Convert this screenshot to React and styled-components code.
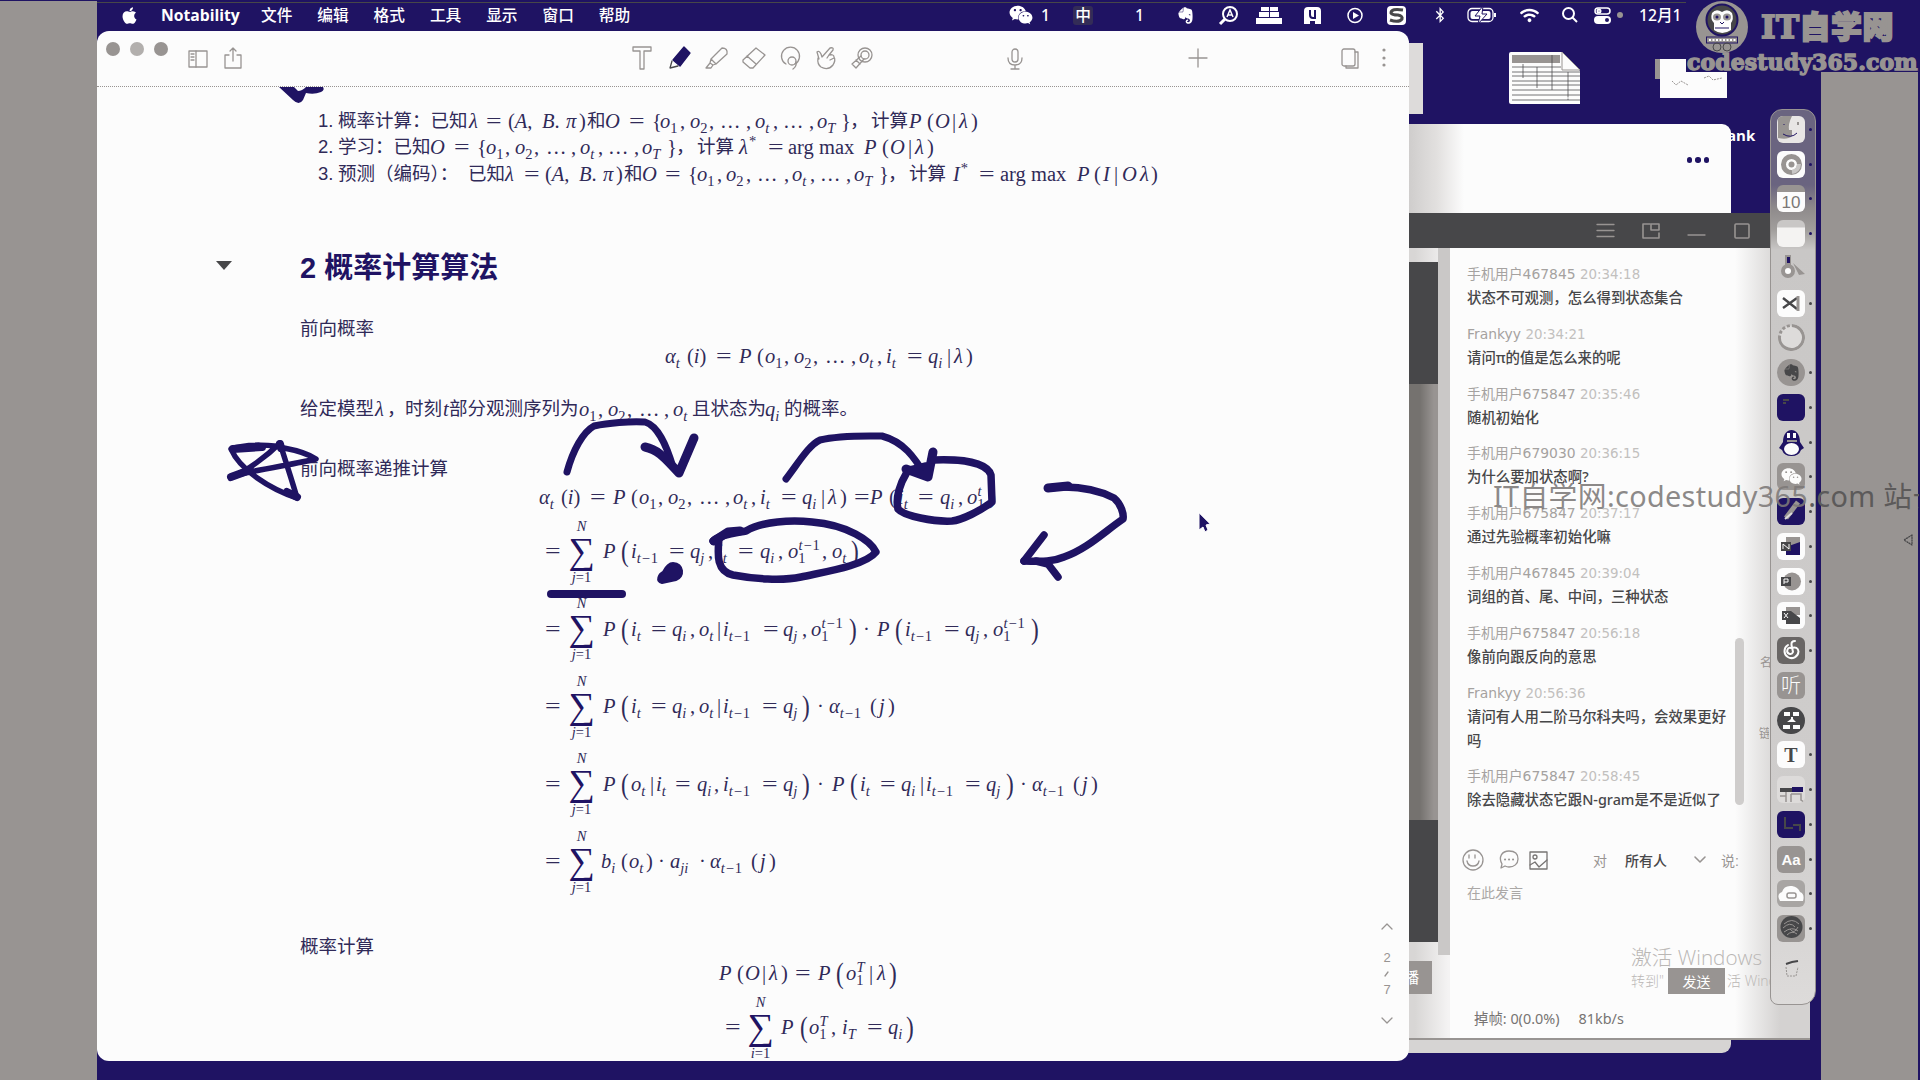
import React from "react";
import styled, { createGlobalStyle, css } from "styled-components";
import { FaApple, FaWeixin, FaEvernote, FaBluetoothB, FaWifi } from "react-icons/fa";

const NAVY = "#1f1363";
const PAPER = "#fcfcfc";
const GREY = "#989492";
const DARK = "#474749";
const INK = "#302a58";
const CJK = '"Liberation Sans", "Noto Sans CJK SC", sans-serif';

const Global = createGlobalStyle`
  * { box-sizing: border-box; }
  body { margin: 0; overflow: hidden; background: ${NAVY}; font-family: ${CJK}; }
  svg { display: block; overflow: visible; flex: none; }
`;

const Desktop = styled.div`
  position: relative;
  width: 1920px;
  height: 1080px;
  overflow: hidden;
  display: flex;
  justify-content: space-between;
  background: ${NAVY};
`;
const SideBar = styled.div`
  width: 97px;
  margin-top: ${(p) => p.$top}px;
  margin-right: ${(p) => p.$right || 0}px;
  background: ${GREY};
`;

/* ---------- menu bar ---------- */
const MenuBar = styled.header`
  position: absolute;
  left: 97px;
  top: 2px;
  width: 1589px;
  height: 28px;
  display: flex;
  align-items: center;
  padding: 0 0 3px 23px;
  overflow: hidden;
  border-top: 1px solid ${DARK};
  color: #fff;
  font-size: 15.7px;
  font-weight: 500;
  white-space: nowrap;
`;
const MenuItem = styled.span`
  width: ${(p) => p.$w}px;
  flex: none;
  display: flex;
  align-items: center;
  line-height: 20px;
  font-weight: ${(p) => (p.$bold ? 700 : 500)};
  font-family: ${(p) => (p.$bold ? '"Open Sans", sans-serif' : '"Noto Sans", "Noto Sans CJK SC", sans-serif')};
`;
const InputMode = styled.span`
  width: 20px;
  height: 19px;
  border-radius: 3px;
  line-height: 18px;
  text-align: center;
  background: #332c57;
`;

/* ---------- notes window ---------- */
const NotesWindow = styled.section`
  position: absolute;
  left: 97px;
  top: 31px;
  width: 1312px;
  height: 1030px;
  border-radius: 12px;
  background: ${PAPER};
  overflow: hidden;
  display: flex;
  flex-direction: column;
`;
const Toolbar = styled.div`
  height: 56px;
  flex: none;
  display: flex;
  align-items: center;
  padding: 0 0 2px 9px;
  border-bottom: 1px dotted ${GREY};
`;
const Lights = styled.div`
  display: flex;
  gap: 10px;
  width: 82px;
  margin-bottom: 18px;
`;
const Light = styled.i`
  width: 14px;
  height: 14px;
  border-radius: 50%;
  background: ${(p) => (p.$soft ? "#b2afad" : GREY)};
`;
const MicDot = styled.i`
  width: 6px;
  height: 6px;
  border-radius: 50%;
  background: ${GREY};
`;
const Tool = styled.span`
  width: ${(p) => p.$w}px;
  flex: none;
  padding-top: ${(p) => p.$drop || 0}px;
`;
const Page = styled.main`
  flex: 1;
  min-height: 0;
  overflow: hidden;
  padding-top: 20.5px;
  color: ${INK};
`;
const Row = styled.div`
  height: ${(p) => p.$h}px;
  margin-top: ${(p) => p.$mt || 0}px;
  padding-left: ${(p) => p.$x - 97}px;
  display: flex;
  align-items: center;
  white-space: nowrap;
  font-size: 18.5px;
`;
const Heading = styled.h2`
  margin: -3px 0 0;
  font-size: 29px;
  font-weight: 700;
  color: ${NAVY};
`;
const Term = styled.span`
  width: ${(p) => (p.$w ? `${p.$w}px` : "auto")};
  flex: none;
  height: 26px;
  line-height: 26px;
  font-family: "Liberation Serif", serif;
  font-size: 20.5px;
`;
const Words = styled(Term)`
  font-family: ${CJK};
  font-size: 18.5px;
`;
const Big = styled.span`
  font-size: 29px;
  line-height: 0;
  vertical-align: -3px;
  display: inline-block;
  transform: scaleX(0.8);
  transform-origin: left;
`;
const Equals = styled.span`
  display: inline-block;
  transform: scaleX(1.35);
  transform-origin: left;
`;
const small = css`
  font-size: 14.5px;
  line-height: 0;
  letter-spacing: ${(p) => (p.$wide ? 0.9 : 0)}px;
`;
const Sub = styled.span`
  ${small}
  vertical-align: -5px;
`;
const Sup = styled.span`
  ${small}
  vertical-align: 8px;
  margin-left: ${(p) => (p.$stacked ? -7 : 1)}px;
`;
const SumBox = styled.span`
  width: ${(p) => p.$w}px;
  flex: none;
  display: flex;
  flex-direction: column;
  align-items: center;
  padding-right: ${(p) => p.$w - 25}px;
  font-family: "Liberation Serif", serif;
  font-size: 14.5px;
  line-height: 16px;
`;
const Sigma = styled.span`
  font-size: 37px;
  height: 35px;
  line-height: 33px;
  color: ${NAVY};
`;

const italicise = (s, key) =>
  s.split(/([A-Za-zαλπ]+)/).map((t, i) => (i % 2 ? <i key={`${key}-${i}`}>{t}</i> : t));

/* _x or _{xyz} lowers, ^x or ^{xyz} raises, << and >> are tall parentheses */
function mathNodes(src) {
  const out = [];
  const re = /([_^])(\{[^}]*\}|.)|<<|>>/g;
  let last = 0;
  let prevSub = false;
  let m;
  while ((m = re.exec(src))) {
    if (m.index > last) {
      out.push(italicise(src.slice(last, m.index), last));
      prevSub = false;
    }
    if (m[0] === "<<" || m[0] === ">>") {
      out.push(<Big key={m.index}>{m[0] === "<<" ? "(" : ")"}</Big>);
    } else {
      const wide = m[2].includes("−");
      const body = italicise(m[2].replace(/[{}]/g, ""), m.index);
      out.push(
        m[1] === "_" ? <Sub key={m.index} $wide={wide}>{body}</Sub> : <Sup key={m.index} $wide={wide} $stacked={prevSub}>{body}</Sup>
      );
      prevSub = m[1] === "_";
    }
    last = re.lastIndex;
  }
  if (last < src.length) out.push(italicise(src.slice(last), last));
  return out;
}

/* terms alternate between the x where a term starts and its source */
function Line({ h, mt, terms }) {
  const cells = [];
  for (let i = 0; i < terms.length; i += 2) {
    const w = i + 2 < terms.length ? terms[i + 2] - terms[i] : 0;
    const t = terms[i + 1];
    if (t.startsWith("SUM")) {
      cells.push(
        <SumBox key={i} $w={w}>
          <i>N</i>
          <Sigma>∑</Sigma>
          <span><i>{t.slice(3)}</i>=1</span>
        </SumBox>
      );
    } else if (/[\u3001-\u9fff\uff00-\uffef]|^\d\.$/.test(t)) {
      cells.push(<Words key={i} $w={w}>{t}</Words>);
    } else if (t === "arg max") {
      cells.push(<Term key={i} $w={w}>{t}</Term>);
    } else if (t === "=") {
      cells.push(<Term key={i} $w={w}><Equals>=</Equals></Term>);
    } else {
      cells.push(<Term key={i} $w={w}>{mathNodes(t)}</Term>);
    }
  }
  return <Row $h={h} $mt={mt} $x={terms[0]}>{cells}</Row>;
}

const LIST = [
  [318, "1.", 338, "概率计算：已知", 469, "λ", 486, "=", 508, "(A,", 542, "B.", 566, "π", 579, ")", 587, "和", 605, "O", 629, "=", 652, "{", 660, "o_1", 680, ",", 690, "o_2", 709, ",", 720, "…", 746, ",", 755, "o_t", 773, ",", 783, "…", 809, ",", 817, "o_T", 841, "}", 850, "，", 871, "计算", 909, "P", 927, "(", 935, "O", 952, "|", 959, "λ", 971, ")"],
  [318, "2.", 338, "学习：已知", 430, "O", 454, "=", 477, "{", 486, "o_1", 505, ",", 515, "o_2", 534, ",", 546, "…", 571, ",", 580, "o_t", 598, ",", 608, "…", 634, ",", 642, "o_T", 667, "}", 676, "，", 697, "计算", 739, "λ^*", 768, "=", 788, "arg max", 864, "P", 882, "(", 890, "O", 908, "|", 915, "λ", 927, ")"],
  [318, "3.", 338, "预测（编码）：", 468, "已知", 505, "λ", 524, "=", 545, "(A,", 579, "B.", 603, "π", 616, ")", 624, "和", 642, "O", 665, "=", 688, "{", 697, "o_1", 717, ",", 726, "o_2", 746, ",", 757, "…", 784, ",", 792, "o_t", 810, ",", 820, "…", 846, ",", 854, "o_T", 879, "}", 888, "，", 909, "计算", 953, "I^*", 979, "=", 1000, "arg max", 1077, "P", 1094, "(", 1103, "I", 1114, "|", 1122, "O", 1140, "λ", 1151, ")"],
];
const ALPHA = [539, "α_t", 561, "(i)", 590, "=", 613, "P", 631, "(", 639, "o_1", 658, ",", 668, "o_2", 687, ",", 699, "…", 725, ",", 733, "o_t", 751, ",", 760, "i_t", 781, "=", 802, "q_i", 821, "|", 828, "λ", 840, ")"];
const shift = (terms, d) => terms.map((t) => (typeof t === "number" ? t + d : t));
const SUMS = [
  [545, "=", 569, "SUMj", 603, "P", 621, "<<", 631, "i_{t−1}", 669, "=", 690, "q_j", 708, ",", 717, "i_t", 738, "=", 760, "q_i", 778, ",", 788, "o_1^{t−1}", 822, ",", 832, "o_t", 851, ">>"],
  [545, "=", 569, "SUMj", 603, "P", 621, "<<", 631, "i_t", 651, "=", 672, "q_i", 690, ",", 699, "o_t", 717, "|", 723, "i_{t−1}", 763, "=", 783, "q_j", 802, ",", 811, "o_1^{t−1}", 849, ">>", 863, "·", 877, "P", 895, "<<", 905, "i_{t−1}", 944, "=", 965, "q_j", 983, ",", 993, "o_1^{t−1}", 1031, ">>"],
  [545, "=", 569, "SUMj", 603, "P", 621, "<<", 631, "i_t", 651, "=", 672, "q_i", 690, ",", 699, "o_t", 717, "|", 723, "i_{t−1}", 762, "=", 783, "q_j", 802, ">>", 817, "·", 829, "α_{t−1}", 870, "(", 879, "j", 888, ")"],
  [545, "=", 569, "SUMj", 603, "P", 621, "<<", 631, "o_t", 650, "|", 656, "i_t", 675, "=", 697, "q_i", 714, ",", 723, "i_{t−1}", 762, "=", 783, "q_j", 802, ">>", 817, "·", 832, "P", 850, "<<", 860, "i_t", 880, "=", 901, "q_i", 920, "|", 926, "i_{t−1}", 965, "=", 986, "q_j", 1006, ">>", 1020, "·", 1032, "α_{t−1}", 1073, "(", 1082, "j", 1091, ")"],
  [545, "=", 569, "SUMj", 601, "b_i", 621, "(", 629, "o_t", 646, ")", 658, "·", 670, "a_{ji}", 699, "·", 710, "α_{t−1}", 751, "(", 760, "j", 769, ")"],
];

const InkLayer = styled.svg`
  position: absolute;
  left: 0;
  top: 0;
  pointer-events: none;
`;
const Pager = styled.nav`
  position: absolute;
  left: 1377px;
  top: 923px;
  width: 20px;
  height: 101px;
  display: flex;
  flex-direction: column;
  align-items: center;
  justify-content: space-between;
  color: ${GREY};
  font-size: 13px;
  line-height: 13px;
`;
const PageCount = styled.div`
  display: flex;
  flex-direction: column;
  align-items: center;
  gap: 6.5px;
`;

function Handwriting() {
  return (
    <InkLayer width="1920" height="1080" fill="none" stroke={NAVY} strokeWidth="7.500" strokeLinecap="round" strokeLinejoin="round">
      <path fill={NAVY} stroke="none" d="M279 87 L293 100 Q299 106 303 100 L306 93 Q314 95 321 92 Q325 90 323 87 H306 Q302 91 298 91 L294 87Z" />
      <path strokeWidth="5.500" d="M231 449 C248 443 275 445 284 448 C300 451 310 455 316 459 C300 463 268 468 245 473 C238 475 234 476 231 477 C246 472 268 455 280 443 C285 460 292 480 297 498 C270 489 240 470 231 449" />
      <path strokeWidth="8" d="M233 449 L262 447 M231 477 L250 470 M287 492 L297 497 M280 444 L281 448" />
      <path strokeWidth="7" d="M567 472 C573 450 583 432 594 426 C608 423 630 421 645 422 C658 426 666 444 673 467" />
      <path strokeWidth="9" d="M645 447 C660 450 668 462 679 473 L694 438" />
      <path strokeWidth="7" d="M786 479 C799 462 809 445 820 440 C840 435 865 436 882 436 C904 442 914 457 926 476" />
      <path strokeWidth="9" d="M906 469 L928 477 L933 452" />
      <path fill={NAVY} d="M910 470 L926 466 L928 477Z" />
      <path d="M934 460 C960 459 987 462 991 475 L992 502 C980 511 962 520 952 521 C934 522 904 516 898 509 C895 497 901 482 906 474" />
      <path strokeWidth="9" d="M1048 488 L1068 486" />
      <path d="M1048 488 C1076 485 1098 490 1114 498 C1121 504 1124 514 1123 519 C1104 532 1087 549 1064 557 C1050 563 1036 561 1024 561" />
      <path d="M1044 535 L1024 561 M1036 561 L1048 564 L1058 577" />
      <path d="M713 541 C721 534 735 533 746 531 C762 521 792 520 812 522 C848 525 871 541 876 552 C865 566 823 572 801 577 C782 581 754 579 733 575 C715 571 718 552 719 538" />
      <path strokeWidth="9" d="M714 541 L728 532 L740 531" />
      <path fill={NAVY} strokeWidth="2" d="M673 563 C684 564 685 577 676 580 L662 583 C655 581 659 574 663 572 C666 566 669 563 673 563Z" />
      <path strokeWidth="8" d="M551 594 H622" />
      <path fill={NAVY} stroke="#fff" strokeWidth="1" d="M1199 513 V530 L1203 527 L1205 532 L1208 530 L1206 525 L1210 524Z" />
    </InkLayer>
  );
}

const TI = ({ w = 22, h = 22, sw = 1.3, children, ...r }) => (
  <svg width={w} height={h} viewBox={`0 0 ${w} ${h}`} fill="none" stroke={GREY} strokeWidth={sw} strokeLinejoin="round" strokeLinecap="round" {...r}>{children}</svg>
);

function Notes() {
  return (
    <NotesWindow>
      <Toolbar>
        <Lights><Light /><Light $soft /><Light /></Lights>
        <Tool $w={36} $drop={2}><TI w={20} h={18}><rect x="1" y="1" width="18" height="16" /><path d="M8 1V17M3 4H6M3 7H6M3 10H6" /></TI></Tool>
        <Tool $w={408}><TI w={18} h={22}><path d="M5 8H1V21H17V8H13M9 14V1M6 4L9 1L12 4" /></TI></Tool>
        <Tool $w={37}><TI w={20} h={24}><path d="M1 1H19V5H12V23H8V5H1Z" /></TI></Tool>
        <Tool $w={36}><TI w={22} h={22}><path fill={NAVY} stroke={NAVY} d="M15 0L21 6L11 19L4 13Z" /><path stroke={DARK} d="M3 14L1 21L9 19" /></TI></Tool>
        <Tool $w={37}><TI w={24} h={22}><path d="M17 1Q23 1 22 7L11 17L6 12ZM6 12L5 16L8 18L11 17M5 16L1 21H6L8 18" /></TI></Tool>
        <Tool $w={37}><TI w={24} h={22}><path d="M14 1L23 8L11 21H8L1 15V13ZM5 9L14 17" /></TI></Tool>
        <Tool $w={37}><TI w={22} h={22}><path d="M7 17A9 9 0 1 1 16 17" /><circle cx="13" cy="14" r="4" /><path d="M17 15Q18 19 14 22" /></TI></Tool>
        <Tool $w={35}><TI w={20} h={24}><path d="M3 13L1 6Q3 4 5 8L6 11L14 2Q18 1 17 4L13 9Q18 8 18 11Q20 14 17 19Q12 25 5 21Q1 18 2 12M13 9L11 12M18 12L14 14" /></TI></Tool>
        <Tool $w={156}><TI w={22} h={22}><circle cx="14" cy="8" r="7" /><circle cx="14" cy="8" r="4" /><path d="M10 9L1 17L5 21L13 12M5 13L9 17" /></TI></Tool>
        <Tool $w={182} $drop={2}><TI w={16} h={22}><rect x="5" y="1" width="6" height="13" rx="3" /><path d="M1 10Q1 17 8 17Q15 17 15 10M8 17V21M4 21H12" /></TI></Tool>
        <Tool $w={152}><TI w={18} h={18}><path d="M9 0V18M0 9H18" /></TI></Tool>
        <Tool $w={40} $drop={2}><TI w={18} h={22}><rect x="1" y="1" width="13" height="17" rx="2" /><path d="M14 4H17V20H5V18" /></TI></Tool>
        <Tool $w={6} $drop={1}><TI w={6} h={20}><g fill={GREY} stroke="none"><circle cx="3" cy="2" r="1.6" /><circle cx="3" cy="10" r="1.6" /><circle cx="3" cy="17" r="1.6" /></g></TI></Tool>
      </Toolbar>
      <Page>
        {LIST.map((t, i) => <Line key={i} h={26.6} terms={t} />)}
        <Row $h={40} $mt={59.5} $x={216}>
          <Term $w={84}><TI w={16} h={9} style={{ marginTop: 7 }}><path fill={DARK} stroke="none" d="M0 0H16L8 9Z" /></TI></Term>
          <Heading>2 概率计算算法</Heading>
        </Row>
        <Line h={30} mt={27} terms={[300, "前向概率"]} />
        <Line h={26} mt={-1} terms={shift(ALPHA, 126)} />
        <Line h={30} mt={25} terms={[300, "给定模型", 375, "λ", 387, "，", 405, "时刻", 443, "t", 449, "部分观测序列为", 579, "o_1", 598, ",", 608, "o_2", 627, ",", 639, "…", 664, ",", 673, "o_t", 692, "且状态为", 765, "q_i", 784, "的概率。"]} />
        <Line h={30} mt={30} terms={[300, "前向概率递推计算"]} />
        <Line h={28} mt={-1} terms={[...ALPHA, 854, "=", 870, "P", 889, "(", 898, "i_t", 918, "=", 940, "q_i", 958, ",", 967, "o_1^t", 989, ")"]} />
        <Row $h={1.5} $x={97} />
        {SUMS.map((t, i) => <Line key={i} h={77.5} terms={t} />)}
        <Line h={28} mt={33} terms={[300, "概率计算"]} />
        <Line h={24} terms={[719, "P", 737, "(", 745, "O", 762, "|", 769, "λ", 781, ")", 795, "=", 818, "P", 836, "<<", 846, "o_1^T", 869, "|", 877, "λ", 889, ">>"]} />
        <Line h={78} mt={3.5} terms={[725, "=", 748, "SUMi", 781, "P", 800, "<<", 809, "o_1^T", 831, ",", 842, "i_T", 867, "=", 888, "q_i", 906, ">>"]} />
      </Page>
    </NotesWindow>
  );
}

/* ---------- desktop behind ---------- */
const Pinned = styled.div`
  position: absolute;
  left: ${(p) => p.$x}px;
  top: ${(p) => p.$y}px;
`;
const FileStrip = styled(Pinned)`
  width: 14px;
  height: 71px;
  background: #dddbda;
`;
const FileLabel = styled(Pinned)`
  color: #fff;
  font: 700 15px/18px "Open Sans", sans-serif;
`;
const BackWindow = styled(Pinned)`
  width: 422px;
  height: 929px;
  border-radius: 9px;
  background: linear-gradient(90deg, #cfcdcc 100px, #e2e0df 128px, ${PAPER} 155px);
  border-bottom: 14px solid #d6d4d3;
  display: flex;
  justify-content: flex-end;
  gap: 3px;
  padding: 33px 22px 0 0;
`;
const Dot = styled.i`
  width: 5.5px;
  height: 5.5px;
  border-radius: 50%;
  background: ${NAVY};
`;
const Meeting = styled(Pinned)`
  width: 410px;
  height: 827px;
  background: ${PAPER};
  border-bottom: 2px solid ${GREY};
  display: flex;
  flex-direction: column;
`;
const TitleBar = styled.div`
  height: 35px;
  flex: none;
  background: ${DARK};
  display: flex;
  align-items: center;
  padding-left: 197px;
`;
const MeetingBody = styled.div`
  flex: 1;
  min-height: 0;
  display: flex;
`;
const VideoColumn = styled.div`
  width: 50px;
  display: flex;
  flex-direction: column;
  padding: 14px 12px 0 0;
  background: linear-gradient(#cac8c7, #cac8c7) right top / 12px 707px no-repeat, linear-gradient(90deg, #d8d6d5 15px, #f4f3f3 48px);
`;
const VideoBlock = styled.div`
  height: ${(p) => p.$h}px;
  flex: none;
  background: ${(p) => p.$c};
`;
const CutButton = styled.div`
  width: 32px;
  height: 33px;
  margin-top: 19px;
  background: ${GREY};
  color: #fff;
  font-size: 15px;
  line-height: 33px;
  text-align: right;
  padding-right: 13px;
`;
const ChatPane = styled.div`
  flex: 1;
  display: flex;
  flex-direction: column;
  padding: 14px 0 0 17px;
  background: linear-gradient(90deg, transparent 285px, #d4d2d1 330px);
`;
const ChatArea = styled.div`
  height: 586px;
  display: flex;
  flex: none;
`;
const ChatList = styled.div`
  width: 268px;
  display: flex;
  flex-direction: column;
`;
const Entry = styled.div`
  padding-bottom: 11.8px;
`;
const Message = styled.div`
  font: 500 14.4px/24px "Noto Sans", "Noto Sans CJK SC", sans-serif;
  line-height: 24px;
  color: ${DARK};
  width: 264px;
  min-height: 24px;
`;
const Sender = styled.div`
  height: 24px;
  font: 13.9px/24px "DejaVu Sans", "Noto Sans CJK SC", sans-serif;
  color: #a5a2a0;
  white-space: pre;
`;
const Time = styled.span`
  color: #c2c0be;
  font-size: 13.4px;
`;
const Scroll = styled.div`
  width: 9px;
  height: 167px;
  margin-top: 376px;
  border-radius: 5px;
  background: #cfcdcc;
`;
const InputTools = styled.div`
  display: flex;
  align-items: center;
  height: 24px;
  margin-left: -5px;
  color: ${GREY};
  font-size: 14px;
`;
const Slot = styled.span`
  width: ${(p) => p.$w}px;
  flex: none;
  color: ${(p) => p.$c || "inherit"};
  font-weight: ${(p) => (p.$c ? 500 : 400)};
`;
const Placeholder = styled.div`
  margin-top: 9px;
  font-size: 14px;
  line-height: 24px;
  color: #aba8a6;
`;
const SendRow = styled.div`
  display: flex;
  margin: 63px 0 0 201px;
`;
const SendButton = styled.button`
  position: relative;
  z-index: 1;
  width: 57px;
  height: 26px;
  padding: 0;
  border: 0;
  background: ${GREY};
  color: #fff;
  font: 14px ${CJK};
`;
const Stats = styled.div`
  display: flex;
  gap: 19px;
  margin: 13px 0 0 7px;
  font: 14.4px/24px "Noto Sans", "Noto Sans CJK SC", sans-serif;
  color: #777473;
`;
const Activate = styled(Pinned)`
  color: #bab7b5;
  white-space: nowrap;
  font: 300 20.7px/28px "Open Sans", "Noto Sans CJK SC", sans-serif;
`;
const ActivateHint = styled(Activate)`
  font-size: 14px;
  line-height: 20px;
`;
const EdgeLabel = styled(Pinned)`
  width: 10px;
  overflow: hidden;
  color: ${GREY};
  font: 12px/14px "Noto Sans CJK SC", sans-serif;
`;

const CHAT = [
  ["手机用户467845", "20:34:18", "状态不可观测，怎么得到状态集合"],
  ["Frankyy", "20:34:21", "请问π的值是怎么来的呢"],
  ["手机用户675847", "20:35:46", "随机初始化"],
  ["手机用户679030", "20:36:15", "为什么要加状态啊?"],
  ["手机用户675847", "20:37:17", "通过先验概率初始化嘛"],
  ["手机用户467845", "20:39:04", "词组的首、尾、中间，三种状态"],
  ["手机用户675847", "20:56:18", "像前向跟反向的意思"],
  ["Frankyy", "20:56:36", "请问有人用二阶马尔科夫吗，会效果更好吗"],
  ["手机用户675847", "20:58:45", "除去隐藏状态它跟N-gram是不是近似了"],
];

function MeetingWindow() {
  return (
    <Meeting $x={1400} $y={213}>
      <TitleBar>
        <Slot $w={45}><TI w={17} h={15}><path d="M0 1.5H17M0 7.5H17M0 13.5H17" /></TI></Slot>
        <Slot $w={46}><TI w={18} h={16} sw={1.6}><path d="M8 1H1V15H17V10" /><rect x="9" y="1" width="8" height="6" /></TI></Slot>
        <Slot $w={46}><TI w={18} h={16}><path d="M0 12H17" /></TI></Slot>
        <TI w={16} h={16} sw={1.6}><rect x="1" y="1" width="14" height="14" rx="1" /></TI>
      </TitleBar>
      <MeetingBody>
        <VideoColumn>
          <VideoBlock $h={122} $c={DARK} />
          <VideoBlock $h={436} $c="linear-gradient(90deg, #75726f 20px, #989492 34px)" />
          <VideoBlock $h={122} $c={DARK} />
          <CutButton>播</CutButton>
        </VideoColumn>
        <ChatPane>
          <ChatArea>
            <ChatList>
              {CHAT.map(([who, at, text], i) => (
                <Entry key={i}>
                  <Sender>{who} <Time>{at}</Time></Sender>
                  <Message>{text}</Message>
                </Entry>
              ))}
            </ChatList>
            <Scroll />
          </ChatArea>
          <InputTools>
            <Slot $w={37}><TI w={22} h={22}><circle cx="11" cy="11" r="10" /><path d="M7 6V9M13 6V9M5 12Q6 17 11 17Q16 17 17 12" /></TI></Slot>
            <Slot $w={30}><TI w={20} h={20}><path d="M10 1C16 1 19 4 19 9C19 14 15 17 10 17Q8 17 6 16L2 18L3 14C-1 7 3 1 10 1Z" /><path strokeWidth="2" d="M6 9.5H6.1M10 9.5H10.1M14 9.5H14.1" /></TI></Slot>
            <Slot $w={64}><TI w={19} h={19} stroke="#777473"><rect x="1" y="1" width="17" height="17" /><circle cx="6" cy="6" r="2" /><path d="M1 14L6 11L10 16L18 9" /></TI></Slot>
            <Slot $w={32}>对</Slot>
            <Slot $w={69} $c={DARK}>所有人</Slot>
            <Slot $w={27}><TI w={12} h={8} sw={1.6}><path d="M1 1L6 6L11 1" /></TI></Slot>
            <Slot $w={20}>说:</Slot>
          </InputTools>
          <Placeholder>在此发言</Placeholder>
          <SendRow><SendButton>发送</SendButton></SendRow>
          <Stats><span>掉帧: 0(0.0%)</span><span>81kb/s</span></Stats>
        </ChatPane>
      </MeetingBody>
    </Meeting>
  );
}

/* ---------- dock ---------- */
const DockBar = styled(Pinned)`
  width: 46px;
  height: 896px;
  padding: 2px 0 0 6px;
  border: 1px solid ${GREY};
  border-radius: 12px 12px 14px 8px;
  background: linear-gradient(#6a6480 0, #6a6480 75px, #8e8a8b 98px, #a19e9c 120px, #c9c7c6 140px, #cfcdcc 700px, #dddbda 100%);
  display: flex;
  flex-direction: column;
`;
const DockItem = styled.div`
  height: 34.75px;
  flex: none;
  display: flex;
  align-items: center;
  gap: 4px;
`;
const Tile = styled.span`
  width: 28px;
  height: 27px;
  flex: none;
  display: flex;
  align-items: center;
  justify-content: center;
  overflow: hidden;
  border-radius: ${(p) => p.$r ?? 6}px;
  background: ${(p) => p.$bg || PAPER};
  color: ${(p) => p.$fg || DARK};
  font: ${(p) => p.$font || '500 17px "Noto Sans CJK SC", sans-serif'};
  line-height: 1;
`;
const Running = styled.i`
  width: 3px;
  height: 3px;
  border-radius: 50%;
  background: ${(p) => p.$c || DARK};
`;
const CalendarDay = styled.span`
  padding-top: 7px;
`;
const Svg27 = ({ children }) => <svg width="27" height="27" viewBox="0 0 27 27" fill="none">{children}</svg>;

const DOCK = [
  [{ $bg: "#e8e6e5" }, <Svg27><path fill={GREY} d="M0 0H14Q10 8 11 14H14V20Q10 24 0 22Z" /><path stroke={NAVY} d="M6 8V9M5 18Q13 23 19 17" /><path stroke={GREY} strokeWidth="2" d="M20 6V9" /></Svg27>, NAVY],
  [{}, <Svg27><circle cx="13.5" cy="13.5" r="8" stroke={GREY} strokeWidth="5" /><path stroke="#c9c7c6" strokeWidth="4" d="M21 13A8 8 0 0 1 14 21" /><circle cx="13.5" cy="13.5" r="3" fill={GREY} /></Svg27>, NAVY],
  [{ $bg: `linear-gradient(${GREY} 7px, ${PAPER} 7px)`, $fg: "#7b7877", $font: '400 17px "Liberation Sans"' }, <CalendarDay>10</CalendarDay>, NAVY],
  [{ $bg: "linear-gradient(#c9c7c6 7px, #f4f3f2 8px)" }, null, NAVY],
  [{ $bg: "transparent" }, <Svg27><path fill={GREY} d="M7 0H13V10H7ZM15 8L27 19L21 20Z" /><path fill={NAVY} d="M9 2H12V8H9Z" /><circle cx="10" cy="16" r="5" stroke={GREY} strokeWidth="4" fill={PAPER} /></Svg27>, null],
  [{}, <Svg27><path stroke={DARK} strokeWidth="2.4" d="M5 8L19 19M5 18L19 8" /><path stroke={GREY} strokeWidth="3" d="M20 6V21" /></Svg27>, DARK],
  [{ $bg: "transparent", $r: 14 }, <Svg27><circle cx="13.5" cy="13.5" r="12" fill="#dddbda" stroke={GREY} strokeWidth="3" strokeDasharray="52 2 3 2 3 2 3 2" transform="rotate(-60 13.5 13.5)" /></Svg27>, null],
  [{ $bg: GREY, $fg: DARK, $r: 14 }, <FaEvernote size={19} />, DARK],
  [{ $bg: NAVY }, <Svg27><path stroke={DARK} strokeWidth="2" d="M5 6H11M5 9H8" /></Svg27>, DARK],
  [{ $bg: "transparent", $fg: NAVY }, <Svg27><path fill={NAVY} d="M5 13C5 -3 22 -3 22 13L26 19L23 21Q21 27 13.5 27Q6 27 4 21L1 19Z" /><ellipse cx="13.5" cy="20" rx="7.5" ry="6" fill={PAPER} /><path fill={PAPER} d="M9 4H12V9H9ZM15 4H18V9H15Z" /><path stroke={GREY} strokeWidth="2" d="M9 12H19" /></Svg27>, DARK],
  [{ $bg: GREY, $fg: PAPER }, <FaWeixin size={21} />, DARK],
  [{ $bg: NAVY }, <Svg27><path stroke={GREY} strokeWidth="5" d="M8 20L20 4" /><path stroke="#dddbda" strokeWidth="2" d="M7 21L14 15" /></Svg27>, DARK],
  [{}, <Svg27><path fill={GREY} d="M8 4H22V14H8Z" /><path fill={NAVY} d="M8 14L22 9V22H8Z" /><path fill={DARK} d="M3 9H13V18H3Z" /><path stroke={PAPER} d="M5 16V11L11 16V11" /></Svg27>, DARK],
  [{}, <Svg27><circle cx="14" cy="13.5" r="9" fill={GREY} /><path fill={DARK} d="M3 9H13V18H3Z" /><path stroke={PAPER} d="M6 16V11H10V14H6" /></Svg27>, DARK],
  [{}, <Svg27><path fill={GREY} d="M8 5H22V13H8Z" /><path fill={DARK} d="M4 9H13L22 16V22H8V18H4Z" /><path stroke={PAPER} d="M6 11L10 16M10 11L6 16" /></Svg27>, DARK],
  [{ $bg: "#696665" }, <Svg27><path stroke={PAPER} strokeWidth="2" strokeLinecap="round" d="M17 4Q13 4 13.500 8L15 15A3 3 0 1 1 13 11Q20 9 20.500 14.500A7 7 0 1 1 10 8" /></Svg27>, DARK],
  [{ $bg: GREY, $fg: PAPER, $font: '300 20px "Noto Sans CJK SC", sans-serif' }, "听", null],
  [{ $bg: DARK, $r: 14 }, <Svg27><g fill={PAPER}><rect x="6" y="5" width="6" height="4" /><rect x="15" y="5" width="6" height="4" /><path d="M13 10H15V12L18 15H9L13 12Z" /><rect x="5" y="18" width="7" height="4" /><rect x="15" y="18" width="7" height="4" /></g></Svg27>, null],
  [{ $font: '700 20px "Liberation Serif"' }, "T", DARK],
  [{ $bg: "#dddbda" }, <Svg27><path fill={DARK} d="M2 12H14V16H2Z" /><path fill={NAVY} d="M14 11H25V16H14Z" /><path stroke={GREY} strokeWidth="1.5" d="M8 16V26M2 20H8M13 18H23V24L26 26M13 18V26" /></Svg27>, DARK],
  [{ $bg: NAVY }, <Svg27><path stroke={DARK} strokeWidth="2" d="M7 6V17H15M15 14H22V20" /></Svg27>, DARK],
  [{ $bg: GREY, $fg: PAPER, $font: '700 15px "Liberation Sans"' }, "Aa", DARK],
  [{ $bg: "#a8a5a3" }, <Svg27><path fill={PAPER} d="M2 21Q-2 14 4 12Q6 5 14 6Q20 7 22 12Q27 14 25 21Z" /><rect x="9" y="13" width="9" height="5" rx="2" stroke={GREY} strokeWidth="1.500" /></Svg27>, DARK],
  [{ $bg: GREY }, <Svg27><circle cx="13.500" cy="12" r="11" fill={DARK} /><path stroke={GREY} d="M6 9Q14 2 21 9M5 13Q12 6 17 12M6 17Q14 11 20 16M12 14Q16 20 20 12M9 20Q14 15 19 19" /></Svg27>, DARK],
  [{ $bg: "transparent" }, <Svg27><path stroke={DARK} strokeWidth="2" d="M8 14L14 12L20 11" /><path stroke={GREY} d="M8 17L9 26H18L20 17" strokeDasharray="2 1" /></Svg27>, null],
];

/* ---------- watermarks ---------- */
const Brand = styled(Pinned)`
  width: 234px;
  height: 72px;
  background: ${NAVY};
  color: ${GREY};
  display: flex;
  flex-direction: column;
  padding: 1px 0 0 1px;
`;
const BrandTop = styled.div`
  display: flex;
  align-items: center;
  gap: 13px;
  height: 52px;
  padding-left: 9px;
  font: 900 31px/52px "DejaVu Serif", "Noto Sans CJK SC", serif;
  letter-spacing: 0.5px;
  -webkit-text-stroke: 1.8px ${GREY};
  white-space: nowrap;
`;
const BrandSite = styled.div`
  font: 700 22px/18px "DejaVu Serif", serif;
  letter-spacing: 0.1px;
  -webkit-text-stroke: 1.4px ${GREY};
`;
const Watermark = styled(Pinned)`
  width: 426px;
  overflow: hidden;
  white-space: nowrap;
  color: rgba(125, 121, 120, 0.88);
  font: 28.8px/40px "Noto Sans", "Noto Sans CJK SC", sans-serif;
  letter-spacing: 0.35px;
`;
const WatermarkTail = styled.span`
  color: #5c5a5a;
`;

const MI = ({ w, h = 19, children }) => <svg width={w} height={h} viewBox={`0 0 ${w} ${h}`} fill="none" stroke="#fff" strokeWidth="2">{children}</svg>;

export default function App() {
  return (
    <Desktop>
      <Global />
      <SideBar $top={1} />
      <SideBar $top={72} $right={2} />

      <MenuBar>
        <MenuItem $w={41}><FaApple size={19} /></MenuItem>
        <MenuItem $w={100} $bold>Notability</MenuItem>
        {["文件", "编辑", "格式", "工具", "显示", "窗口"].map((t) => <MenuItem key={t} $w={56.3}>{t}</MenuItem>)}
        <MenuItem $w={410.2}>帮助</MenuItem>
        <MenuItem $w={32}><FaWeixin size={24} /></MenuItem>
        <MenuItem $w={32}>1</MenuItem>
        <MenuItem $w={62}><InputMode>中</InputMode></MenuItem>
        <MenuItem $w={41}>1</MenuItem>
        <MenuItem $w={43}><FaEvernote size={19} /></MenuItem>
        <MenuItem $w={37}><MI w={19}><circle cx="11" cy="8" r="7" /><path d="M8 11L11 4L14 11M9 9H13" strokeWidth="1.500" /><path d="M6 13L1 18" strokeWidth="3" /></MI></MenuItem>
        <MenuItem $w={48}><MI w={26}><g fill="#fff" stroke="none"><rect x="5" y="1" width="8" height="4" /><rect x="14" y="1" width="8" height="4" /><rect x="3" y="6" width="10" height="5" /><rect x="14" y="6" width="9" height="5" /><rect x="0" y="12" width="26" height="6" /></g></MI></MenuItem>
        <MenuItem $w={43}><MI w={18}><path fill="#fff" stroke="none" d="M0 5Q0 1 4 1H13Q17 1 17 5V18H11V15H6V18H0Z" /><path stroke={NAVY} strokeWidth="2" d="M6 4V9Q6 12 9 12H11V4" /></MI></MenuItem>
        <MenuItem $w={40}><MI w={16}><circle cx="8" cy="9.500" r="7" strokeWidth="1.500" /><path fill="#fff" stroke="none" d="M6 6L12 9.500L6 13Z" /></MI></MenuItem>
        <MenuItem $w={45}><MI w={20}><rect width="19" height="19" rx="4" fill="#fff" stroke="none" /><path stroke={DARK} strokeWidth="3" d="M16 4Q4 2 4 7Q5 9 11 9Q16 10 15 13Q12 17 3 14" /></MI></MenuItem>
        <MenuItem $w={35}><FaBluetoothB size={16} /></MenuItem>
        <MenuItem $w={53}><MI w={30} h={17}><rect x="1" y="1.500" width="25" height="13" rx="4" strokeWidth="1.300" /><rect x="3.500" y="4" width="20" height="8" rx="2" fill="#fff" stroke="none" /><path d="M28 6V10" /><path fill="#fff" stroke={NAVY} strokeWidth="1" d="M16 -1L8 9H13L11 17L20 7H15Z" /></MI></MenuItem>
        <MenuItem $w={42}><FaWifi size={19} /></MenuItem>
        <MenuItem $w={32}><MI w={16}><circle cx="6.500" cy="7.500" r="5.500" /><path d="M10.500 11.500L15 16" /></MI></MenuItem>
        <MenuItem $w={23}><MI w={18}><rect x="1" y="2" width="15" height="6" rx="3" strokeWidth="1.500" /><rect x="0" y="10" width="17" height="8" rx="4" fill="#fff" stroke="none" /><circle cx="5" cy="5" r="1.500" /><circle cx="13" cy="14" r="2" fill={NAVY} stroke="none" /></MI></MenuItem>
        <MenuItem $w={22}><MicDot /></MenuItem>
        <MenuItem $w={46}>12月1</MenuItem>
      </MenuBar>

      <FileStrip $x={1409} $y={43} />
      <Pinned $x={1509} $y={52}>
        <svg width="72" height="52" viewBox="0 0 72 52">
          <path fill={PAPER} d="M0 2Q0 0 2 0H53L71 19V52H2Q0 52 0 50Z" />
          <path fill={GREY} d="M3 3H51V11H3Z" />
          <path stroke={DARK} strokeWidth="1" fill="none" d="M3 15H52M3 20H71M3 24H71M3 29H71M3 33H71M3 38H71M3 43H71M3 48H71M14 12V26M28 15V36M43 3V38M59 20V48" opacity=".75" />
          <path stroke="#fff" strokeWidth="1" fill="none" d="M3 46H71" />
          <path stroke={GREY} fill={PAPER} d="M53 0V18H71Z" />
        </svg>
      </Pinned>
      <Pinned $x={1655} $y={59}>
        <svg width="73" height="40" viewBox="0 0 73 40"><path fill={GREY} d="M0 0H5V20H0Z" /><path fill={PAPER} d="M5 0H72V39H5Z" /><path stroke={GREY} fill="none" strokeDasharray="2 1" d="M17 22L21 26L26 22L33 26M49 19L54 17L58 21L67 19" /></svg>
      </Pinned>
      <FileLabel $x={1727} $y={126}>ank</FileLabel>
      <BackWindow $x={1309} $y={124}><Dot /><Dot /><Dot /></BackWindow>
      <MeetingWindow />
      <EdgeLabel $x={1760} $y={655}>名</EdgeLabel>
      <EdgeLabel $x={1759} $y={726}>链</EdgeLabel>
      <Activate $x={1631} $y={943}>激活 Windows</Activate>
      <ActivateHint $x={1727} $y={971}>活 Windows</ActivateHint>
      <ActivateHint $x={1631} $y={971}>转到"</ActivateHint>

      <DockBar $x={1770} $y={109}>
        {DOCK.map(([tile, glyph, run], i) => (
          <DockItem key={i}><Tile {...tile}>{glyph}</Tile>{run && <Running $c={run} />}</DockItem>
        ))}
      </DockBar>

      <Notes />
      <Pager>
        <TI w={12} h={7}><path d="M1 6L6 1L11 6" /></TI>
        <PageCount>
          <span>2</span>
          <TI w={5} h={6}><path d="M1 5L4 1" /></TI>
          <span>7</span>
        </PageCount>
        <TI w={12} h={7}><path d="M1 1L6 6L11 1" /></TI>
      </Pager>
      <Handwriting />

      <Watermark $x={1493} $y={476}>IT自学网:codestudy365<WatermarkTail>.com 站长</WatermarkTail></Watermark>
      <Pinned $x={1904} $y={535}><TI w={9} h={10} stroke={DARK}><path strokeDasharray="1 1.500" d="M8 0V10L0 5Z" /></TI></Pinned>
      <Brand $x={1686} $y={0}>
        <BrandTop>
          <svg width="52" height="52" viewBox="0 0 52 52" fill="none">
            <circle cx="26" cy="26" r="26" fill={GREY} />
            <circle cx="26" cy="19" r="15.500" fill={DARK} stroke={NAVY} strokeWidth="2" />
            <path fill={PAPER} d="M16 12Q20 7 26 11Q32 7 36 12Q38 18 35 22V29Q26 35 18 29V22Q14 18 16 12Z" />
            <ellipse cx="21" cy="16" rx="4" ry="3.500" fill={GREY} /><ellipse cx="31" cy="16" rx="4" ry="3.500" fill={GREY} />
            <circle cx="21" cy="16" r="1.500" fill={NAVY} /><circle cx="31" cy="16" r="1.500" fill={NAVY} />
            <path stroke={NAVY} d="M24 21L26 23L28 21M19 27H33" />
            <rect x="10.500" y="36" width="31" height="6" fill={GREY} stroke={NAVY} />
            <path stroke="#fff" strokeWidth="2" strokeDasharray="2 1.500" d="M13 39H40" />
            <circle cx="21" cy="46" r="4" stroke={DARK} /><circle cx="31" cy="46" r="4" stroke={DARK} />
          </svg>
          <span>IT自学网</span>
        </BrandTop>
        <BrandSite>codestudy365.com</BrandSite>
      </Brand>
    </Desktop>
  );
}
